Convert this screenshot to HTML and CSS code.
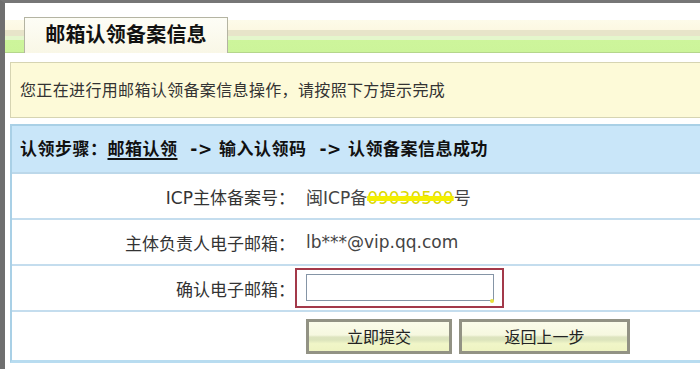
FILE: index.html
```html
<!DOCTYPE html>
<html>
<head>
    <meta charset="utf-8">
    <title>邮箱认领备案信息</title>
    <link rel="stylesheet" href="styles.css">
</head>
<body>
    <div class="frame">
        <div class="tabbar">
            <div class="tab">邮箱认领备案信息</div>
        </div>

        <div class="notice">您正在进行用邮箱认领备案信息操作，请按照下方提示完成</div>

        <div class="panel">
            <div class="steps">
                认领步骤：<span class="current">邮箱认领</span>&nbsp; -&gt; 输入认领码&nbsp; -&gt; 认领备案信息成功
            </div>
            <div class="row">
                <div class="label">ICP主体备案号：</div>
                <div class="value"><span class="value-text">闽ICP备<span class="masked">09030500</span>号</span></div>
            </div>
            <div class="row">
                <div class="label">主体负责人电子邮箱：</div>
                <div class="value"><span class="value-text">lb***@vip.qq.com</span></div>
            </div>
            <div class="row">
                <div class="label">确认电子邮箱：</div>
                <div class="value">
                    <div class="input-wrap"><input type="text" id="email"></div>
                </div>
            </div>
            <div class="row row-buttons">
                <div class="label"></div>
                <div class="value buttons">
                    <button type="button" class="btn btn-submit">立即提交</button>
                    <button type="button" class="btn btn-back">返回上一步</button>
                </div>
            </div>
        </div>
    </div>
</body>
</html>
```

FILE: styles.css
```css
body {
    margin: 0;
    background: #fff;
    font-family: "DejaVu Sans", "Noto Sans CJK SC", sans-serif;
    font-size: 16px;
    color: #333;
}

.frame {
    border-top: 3px solid #767676;
    border-left: 5px solid #6f6f6f;
    height: 366px;
    overflow: hidden;
}

.tabbar {
    height: 50px;
    display: flex;
    align-items: flex-end;
    padding-left: 19px;
    background: linear-gradient(to bottom,
        #ffffff 0, #ffffff 17px,
        #fdfbe9 17px, #fcf8e2 27px,
        #e7e4c9 27px, #e7e4c9 33px,
        #e4f6cc 33px, #e4f6cc 37px,
        #cdf59b 37px, #ccf49a 49px,
        #b5d68c 49px, #b5d68c 50px);
}

.tab {
    width: 202px;
    height: 35px;
    border: 1px solid #b4b4a2;
    border-bottom: none;
    background: linear-gradient(to bottom, #fdfdf6, #f9f7e6);
    font-family: "Noto Sans CJK SC", sans-serif;
    font-size: 20px;
    font-weight: bold;
    letter-spacing: 0.2px;
    color: #111;
    text-align: center;
    line-height: 31px;
}

.notice {
    margin: 9px 0 0 5px;
    height: 54px;
    border: 1px solid #d6d4b2;
    border-right: none;
    background: #fdfad8;
    padding-left: 9px;
    line-height: 53px;
    font-family: "Noto Sans CJK SC", sans-serif;
    letter-spacing: 0.35px;
    color: #333;
}

.panel {
    margin: 6px 0 0 5px;
    border: 2px solid #a9d0e6;
    border-right: none;
    border-bottom: 3px solid #b8dcf0;
}

.steps {
    height: 46px;
    line-height: 46px;
    padding-left: 8px;
    background: #c9e6f9;
    border-bottom: 2px solid #bcd8ea;
    font-size: 17px;
    letter-spacing: 0.5px;
    font-weight: bold;
    color: #111;
}

.current {
    text-decoration: underline;
    text-decoration-thickness: 2px;
    text-underline-offset: 3px;
}

.row {
    display: grid;
    grid-template-columns: 283px 1fr;
    align-items: center;
    height: 44px;
    border-bottom: 2px solid #c4ddee;
    background: #fff;
    font-size: 17px;
}

.row-buttons {
    height: 48px;
    border-bottom: none;
}

.label {
    text-align: right;
    color: #333;
}

.value-text {
    padding-left: 11px;
    color: #444;
}

.masked {
    color: #dcd800;
    text-decoration: line-through;
    text-decoration-color: #f4f000;
    text-decoration-thickness: 5px;
}

.input-wrap {
    width: 196px;
    height: 28px;
    border: 2px solid #a3394a;
    padding: 4px 0 4px 9px;
    position: relative;
}

.input-wrap input {
    width: 186px;
    height: 25px;
    margin: 0;
    padding: 0;
    border: 1px solid #8595a6;
    background: #fff;
    display: block;
}

.input-wrap::after {
    content: "";
    position: absolute;
    left: 193px;
    top: 29px;
    width: 4px;
    height: 4px;
    border-radius: 50%;
    background: #e8e23a;
}

.buttons {
    display: flex;
    gap: 7px;
    padding-left: 11px;
}

.btn {
    height: 35px;
    border: 3px solid #929284;
    background: linear-gradient(to bottom,
        #fbfcea 0%, #f6f8e0 45%,
        #dde4bf 52%, #dce4bc 62%,
        #f1f6c8 75%, #eef3c2 100%);
    font-family: "Noto Sans CJK SC", sans-serif;
    font-size: 16px;
    color: #222;
    padding: 0;
    cursor: pointer;
}

.btn-submit {
    width: 146px;
}

.btn-back {
    width: 171px;
}
```
